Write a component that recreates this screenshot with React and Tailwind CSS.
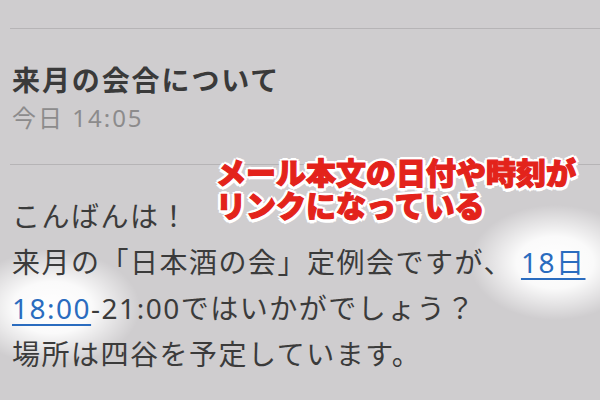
export default function App() {
  const jp = { fontFamily: '"Noto Sans", "Noto Sans CJK JP", sans-serif' };

  return (
    <div
      className="relative w-[600px] h-[400px] overflow-hidden bg-[#cfcdcf] text-[#3b3b3b]"
      style={jp}
    >
      {/* glow behind the linked date / time */}
      <div className="absolute left-[470px] top-[205px] w-[170px] h-[115px] bg-[radial-gradient(closest-side,rgba(255,255,255,1)_0%,rgba(255,255,255,0.9)_45%,rgba(255,255,255,0)_100%)]" />
      <div className="absolute left-[-35px] top-[250px] w-[175px] h-[115px] bg-[radial-gradient(closest-side,rgba(255,255,255,1)_0%,rgba(255,255,255,0.9)_45%,rgba(255,255,255,0)_100%)]" />

      <div className="relative z-10 pt-[28px] pl-[10px]">
        <div className="border-t border-[#b6b4b6]" />

        {/* header */}
        <div className="pt-[33px] pl-[2px]">
          <div className="text-[28px] leading-[36px] font-bold tracking-[1.9px] text-[#3a3a3a] whitespace-nowrap">
            来月の会合について
          </div>
          <div className="mt-[4px] text-[24px] leading-[32px] tracking-[2px] text-[#8c8b8c] whitespace-nowrap">
            今日 14:05
          </div>
        </div>

        <div className="mt-[30px] border-t border-[#b6b4b6]" />

        {/* body */}
        <div className="pt-[28px] pl-[2px] text-[28px] leading-[46px] tracking-[1.5px] whitespace-nowrap">
          <div>こんばんは！</div>
          <div>
            来月の「日本酒の会」定例会ですが、
            <span className="ml-[8px] text-[#2a6cbf] underline decoration-[1.5px] underline-offset-[5px]">18日</span>
          </div>
          <div>
            <span className="text-[#2a6cbf] underline decoration-[1.5px] underline-offset-[5px]">18:00</span>
            -21:00ではいかがでしょう？
          </div>
          <div>場所は四谷を予定しています。</div>
        </div>
      </div>

      {/* annotation */}
      <div className="absolute left-[216px] top-[156px] z-20 text-[30px] leading-[33px] font-black text-[#e3231b] whitespace-nowrap [-webkit-text-stroke:1.2px_#e3231b] [text-shadow:3.5px_0_0_#fff,-3.5px_0_0_#fff,0_3.5px_0_#fff,0_-3.5px_0_#fff,2.5px_2.5px_0_#fff,-2.5px_2.5px_0_#fff,2.5px_-2.5px_0_#fff,-2.5px_-2.5px_0_#fff]">
        <div>メール本文の日付や時刻が</div>
        <div>リンクになっている</div>
      </div>
    </div>
  );
}
